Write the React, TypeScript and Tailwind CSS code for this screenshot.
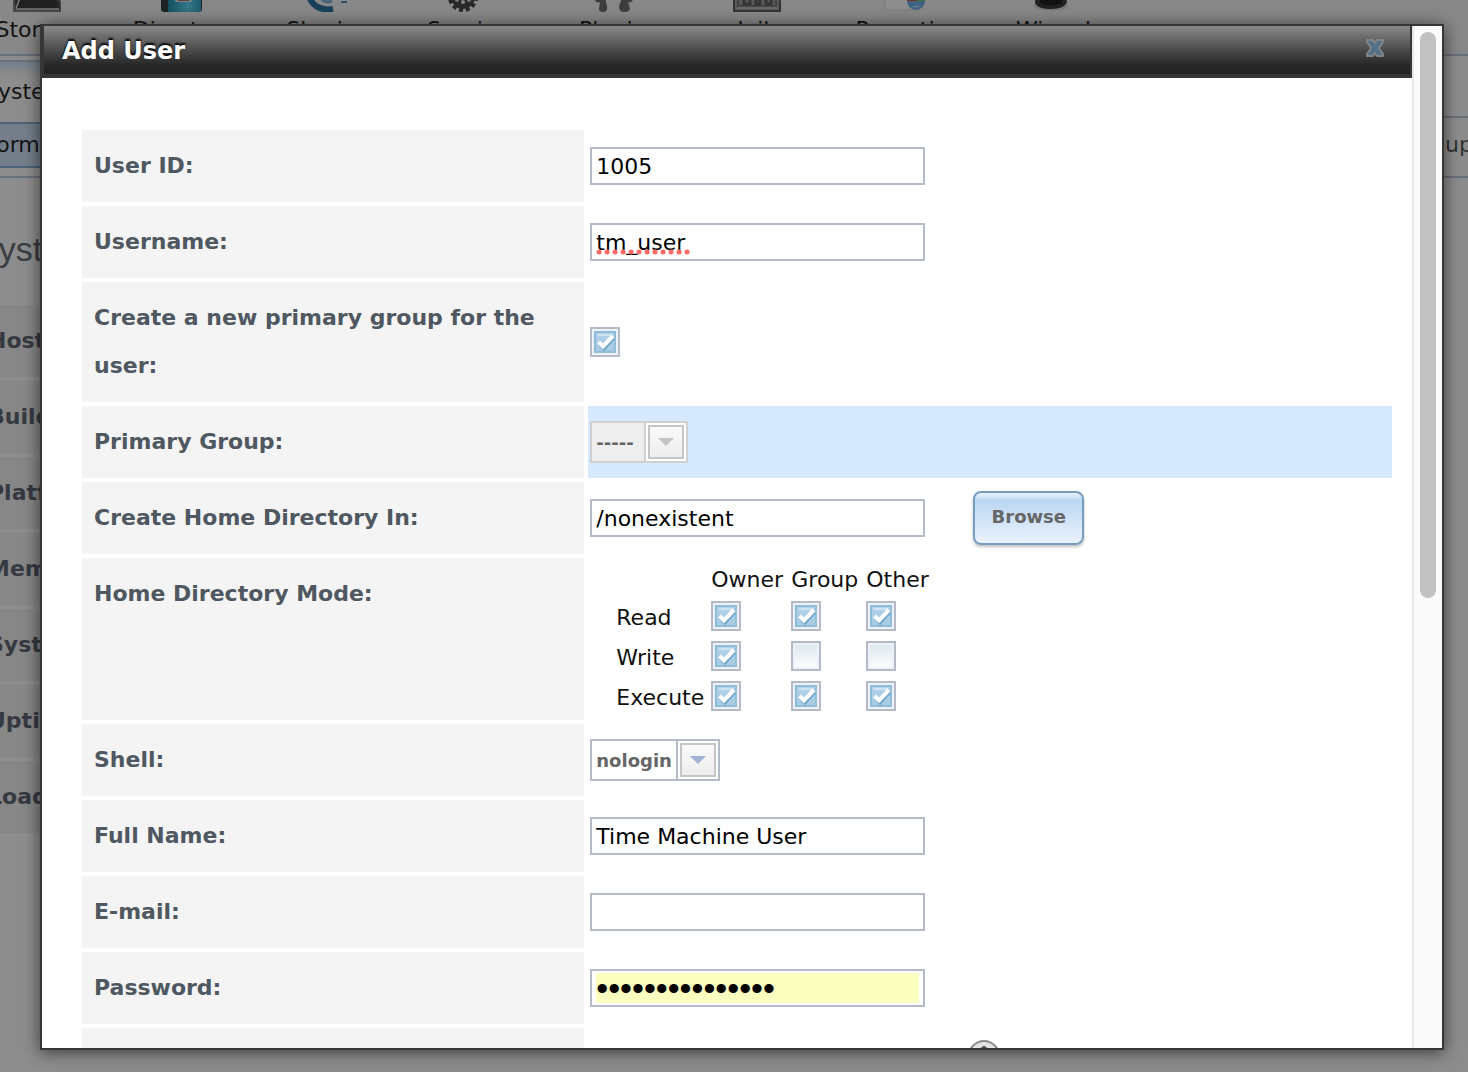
import React, { useState } from 'react';

const StorageIcon = () => (
  <svg width="48" height="48" viewBox="0 0 48 48">
    <path d="M1 47V38L6 20H42L47 38V47Z" fill="#2c2c2c" />
    <path d="M3 45L9 24H39L46 45Z" fill="#222" />
    <path d="M1 36V47H48V36" fill="none" stroke="#484848" strokeWidth="2" />
    <path d="M3 44.500L7 34M3 45H46" fill="none" stroke="#7a7a7a" strokeWidth="1.500" />
  </svg>
);

const DirectoryIcon = () => (
  <svg width="48" height="48" viewBox="0 0 48 48">
    <defs>
      <radialGradient id="cover" cx="0.6" cy="0.85" r="0.6">
        <stop offset="0" stopColor="#35788b" />
        <stop offset="1" stopColor="#14505f" />
      </radialGradient>
    </defs>
    <rect x="3" y="6" width="41" height="42" rx="3" fill="#1e2426" />
    <rect x="10" y="6" width="33" height="42" fill="url(#cover)" />
    <rect x="17" y="14" width="17" height="24" rx="2" fill="#7d8285" />
    <path d="M20 34h11v3H20z" fill="#5c4038" />
  </svg>
);

const SharingIcon = () => (
  <svg width="48" height="48" viewBox="0 0 48 48">
    <path d="M6 32C9 42 18 47 30 45" fill="none" stroke="#17405a" strokeWidth="6" />
    <path d="M17 32C20 38 24 39 29 37" fill="none" stroke="#46647b" strokeWidth="3" />
    <path d="M38 38h6l-4 0-1 1z" fill="#17405a" stroke="#17405a" />
  </svg>
);

const ServicesIcon = () => (
  <svg width="48" height="48" viewBox="0 0 48 48">
    <circle cx="15" cy="33" r="13" fill="none" stroke="#262626" strokeWidth="4" strokeDasharray="3.800 3" />
    <circle cx="15" cy="33" r="12" fill="#2a2a2a" />
    <circle cx="15" cy="38" r="2" fill="#858585" />
    <circle cx="9" cy="36" r="2" fill="#777" />
    <circle cx="21" cy="36" r="2" fill="#777" />
  </svg>
);

const PluginsIcon = () => (
  <svg width="48" height="48" viewBox="0 0 48 48">
    <path d="M0 34Q4 40 7 38L6 45Q6 48 10 48Q15 48 14 42L12 34Z" fill="#3d3d3d" />
    <path d="M41 34Q38 40 35 38L37 45Q36 48 31 48Q26 48 26 42L29 34Z" fill="#3d3d3d" />
  </svg>
);

const JailsIcon = () => (
  <svg width="48" height="48" viewBox="0 0 48 48">
    <path d="M1 10V47H47V10Z" fill="#5a5a5a" stroke="#343434" strokeWidth="2" />
    <path d="M5 10V42H43V10" fill="none" stroke="#444" strokeWidth="2" />
    <path d="M11 10V40H17V10M23 10V40H27V10M33 10V40H38V10" fill="none" stroke="#363636" strokeWidth="3" />
    <path d="M4 44H44" stroke="#686868" strokeWidth="2" />
  </svg>
);

const ReportingIcon = () => (
  <svg width="48" height="48" viewBox="0 0 48 48">
    <path d="M2 10H36V46H2Z" fill="#8e8e8e" stroke="#7a7a7a" />
    <circle cx="33" cy="37" r="9" fill="#3f6382" />
    <path d="M33 37V28A9 9 0 0 0 24 37Z" fill="#742f22" />
    <path d="M33 37V28A9 9 0 0 1 42 37Z" fill="#456f38" />
    <path d="M28 42a6 3 0 0 0 10 0" fill="#6b8199" />
  </svg>
);

const WizardIcon = () => (
  <svg width="48" height="48" viewBox="0 0 48 48">
    <ellipse cx="23" cy="42" rx="17" ry="5" fill="#7a7a7a" />
    <path d="M11 8H33L39 38Q37 45 23 45Q8 45 7 38Z" fill="#222" />
    <path d="M12 39Q23 44 34 39V36H12Z" fill="#121212" />
  </svg>
);

const toolbar = [
  { label: 'Storage', icon: <StorageIcon /> },
  { label: 'Directory', icon: <DirectoryIcon /> },
  { label: 'Sharing', icon: <SharingIcon /> },
  { label: 'Services', icon: <ServicesIcon /> },
  { label: 'Plugins', icon: <PluginsIcon /> },
  { label: 'Jails', icon: <JailsIcon /> },
  { label: 'Reporting', icon: <ReportingIcon /> },
  { label: 'Wizard', icon: <WizardIcon /> },
];

const infoRows = ['Hostname', 'Build', 'Platform', 'Memory', 'System Time', 'Uptime', 'Load Average'];

// The dimmed page behind the dialog, scrolled a little to the right and down
const Backdrop: React.FC = () => (
  <div className="h-full overflow-hidden bg-[#8d8d8d] text-[22px] text-[#141414]">
    <nav className="-mt-9 -ml-9 grid h-[90px] grid-cols-[repeat(5,145px)_136px_164px_125px] bg-[#888888]">
      {toolbar.map(item => (
        <a key={item.label} href="#" className="flex flex-col items-center leading-9">
          {item.icon}
          <span className="pl-1">{item.label}</span>
        </a>
      ))}
    </nav>
    <div className="flex">
      <div className="flex-1">
        <div className="h-2 border-y-2 border-[#6a7077]" />
        <div className="flex h-[60px] items-center bg-linear-to-b from-[#74808c] to-[#8d8d8d] to-25%">
          <span className="-ml-4 leading-[64px]">System</span>
        </div>
        <div className="h-[56px] border-b-2 border-[#6a7077]">
          <div className="-ml-11 h-[46px] w-[200px] border-y-2 border-[#4d6275] bg-[#747f8b] pl-3 leading-[42px]">Information</div>
        </div>
      </div>
      <div className="w-6 border-y-2 border-[#6a7077] whitespace-nowrap text-[#333]">
        <div className="h-[60px]" />
        <div className="border-t-2 border-[#6a7077] pl-px leading-[54px]">up</div>
      </div>
    </div>
    <h1 className="-ml-6 pt-12 pb-8 font-['Liberation_Sans',sans-serif] text-[34px] leading-[47px] text-[#3a3d42]">System</h1>
    <div className="-ml-5 flex flex-col gap-1">
      {infoRows.map(row => (
        <div key={row} className="h-[72px] w-[500px] bg-[#878787] pl-2 font-bold leading-[72px] text-[#363a40]">{row}</div>
      ))}
    </div>
  </div>
);

type RowProps = { label?: string; htmlFor?: string; highlight?: boolean; children?: React.ReactNode };

const Row: React.FC<RowProps> = ({ label, htmlFor, highlight, children }) => (
  <div className="grid grid-cols-[5fr_8fr] gap-1">
    <label htmlFor={htmlFor} className="min-h-[72px] bg-[#f4f4f4] p-3 text-[22px] font-bold leading-[48px] text-[#4f5861]">
      {label}
    </label>
    <div className={highlight ? 'flex items-center bg-[#d7e9fe] pl-[2px]' : 'flex items-center pl-[2px]'}>{children}</div>
  </div>
);

const fieldClass = 'h-[38px] w-[335px] border-2 border-[#b5bac9] px-1 text-[22px] text-black outline-none';

const CheckBox: React.FC<{ id?: string; name: string; initial: boolean }> = ({ id, name, initial }) => {
  const [checked, setChecked] = useState(initial);
  return (
    <span className="relative block size-[30px]">
      <input
        id={id}
        type="checkbox"
        aria-label={name}
        checked={checked}
        onChange={e => setChecked(e.target.checked)}
        className="peer block size-[30px] appearance-none border-2 border-[#b5bac9] bg-linear-to-b from-[#dbe7f0] to-white shadow-[inset_0_0_0_2px_#eef2f6] checked:from-[#b3d3e8] checked:to-[#a3cae2]"
      />
      <svg width="30" height="30" viewBox="0 0 30 30" className="pointer-events-none absolute inset-0 hidden peer-checked:block">
        <path d="M5 5h20v20h-20z" fill="none" stroke="#8fbcd9" strokeWidth="2" />
        <path d="M8 8h14" stroke="#cfe3f0" strokeWidth="2" />
        <path d="M9 17l5 5L24 11" fill="none" stroke="#6ea6ca" strokeWidth="3" />
        <path d="M8.500 15l4.500 4.500L23 9" fill="none" stroke="#fff" strokeWidth="4" />
      </svg>
    </span>
  );
};

const Select: React.FC<{ id: string; options: string[]; disabled?: boolean; className: string }> = ({ id, options, disabled, className }) => (
  <span className="relative block">
    <select
      id={id}
      disabled={disabled}
      className={`block h-[42px] appearance-none border-2 pl-1 text-[18px] font-bold text-[#666] opacity-100 outline-none ${className}`}
    >
      {options.map(o => <option key={o}>{o}</option>)}
    </select>
    <span
      className={
        disabled
          ? 'pointer-events-none absolute inset-y-[2px] right-[2px] w-[42px] border-l-2 border-[#d0d0d0] bg-white p-[2px]'
          : 'pointer-events-none absolute inset-y-[2px] right-[2px] w-[42px] border-l-2 border-[#b5bac9] bg-white p-[2px]'
      }
    >
      <span className="flex h-[34px] w-9 items-center justify-center border-2 border-[#c5c5c5] bg-linear-to-b from-[#fafafa] to-[#ededed]">
        <svg width="16" height="10" viewBox="0 0 16 10">
          <path d="M0 1h16L8 9z" fill={disabled ? '#c4c4c4' : '#a0b2d6'} />
        </svg>
      </span>
    </span>
  </span>
);

const modes = [
  { name: 'Read', bits: [true, true, true] },
  { name: 'Write', bits: [true, false, false] },
  { name: 'Execute', bits: [true, true, true] },
];
const who = ['Owner', 'Group', 'Other'];

const ModeTable: React.FC = () => (
  <table className="mt-[6px] mb-1 ml-[26px] w-[320px] table-fixed border-collapse text-left text-[22px] text-[#111]">
    <thead>
      <tr className="h-8">
        <td className="w-[95px] p-0" />
        <th className="w-[80px] p-0 font-normal leading-8">Owner</th>
        <th className="w-[75px] p-0 font-normal leading-8">Group</th>
        <th className="w-[70px] p-0 font-normal leading-8">Other</th>
      </tr>
    </thead>
    <tbody>
      {modes.map(mode => (
        <tr key={mode.name} className="h-10">
          <th className="p-0 pt-1 font-normal leading-9">{mode.name}</th>
          {mode.bits.map((bit, i) => (
            <td key={who[i]} className="p-0">
              <CheckBox name={`${who[i]} ${mode.name}`} initial={bit} />
            </td>
          ))}
        </tr>
      ))}
    </tbody>
  </table>
);

const HelpIcon = () => (
  <svg width="32" height="32" viewBox="0 0 32 32" className="mt-3 ml-[43px] self-start">
    <circle cx="16" cy="16" r="15" fill="#e4e4e4" stroke="#8a8a8a" strokeWidth="2" />
    <circle cx="16" cy="9" r="3" fill="#555" />
  </svg>
);

const App: React.FC = () => {
  const [userId, setUserId] = useState('1005');
  const [username, setUsername] = useState('tm_user');
  const [home, setHome] = useState('/nonexistent');
  const [fullName, setFullName] = useState('Time Machine User');
  const [email, setEmail] = useState('');
  const [password, setPassword] = useState('timemachineuser');

  return (
    <div className="relative h-screen overflow-hidden font-['DejaVu_Sans',sans-serif]">
      <Backdrop />
      <div className="absolute inset-0 pt-6 pr-6 pb-[22px] pl-10">
        <div role="dialog" aria-label="Add User" className="flex h-full border-2 border-[#363636] bg-white shadow-[0_2px_16px_rgba(0,0,0,0.6)]">
          <div className="flex min-w-0 flex-1 flex-col overflow-hidden">
            <header className="flex h-[52px] shrink-0 items-center justify-between border-x-2 border-b-4 border-[#363636] bg-linear-to-b from-[#8a8a8a] via-[#292929] via-80% to-[#222] pr-6 pl-[18px]">
              <h2 className="pt-[2px] text-[24px] font-bold leading-8 text-white [text-shadow:0_-2px_2px_#000]">Add User</h2>
              <button type="button" aria-label="Close" className="block pb-1">
                <svg width="22" height="20" viewBox="0 0 22 20">
                  <path
                    d="M3 2H9L11 5L13 2H19V4L15 10L19 16V18H13L11 15L9 18H3V16L7 10L3 4Z"
                    fill="#566f88"
                    stroke="#808488"
                    strokeWidth="2"
                    strokeLinejoin="round"
                  />
                </svg>
              </button>
            </header>

            <form className="flex flex-col gap-1 pt-[52px] pr-5 pl-10" onSubmit={e => e.preventDefault()}>
              <Row label="User ID:" htmlFor="uid">
                <input id="uid" type="text" value={userId} onChange={e => setUserId(e.target.value)} className={fieldClass} />
              </Row>
              <Row label="Username:" htmlFor="username">
                <span className="relative block">
                  <input id="username" type="text" spellCheck={false} value={username} onChange={e => setUsername(e.target.value)} className={fieldClass} />
                  {/* spelling marks */}
                  <svg width="96" height="6" viewBox="0 0 96 6" className="pointer-events-none absolute top-[26px] left-[6px]">
                    <path d="M3 3H95" stroke="#fb6a64" strokeWidth="5" strokeLinecap="round" strokeDasharray="0.100 7.900" />
                  </svg>
                </span>
              </Row>
              <Row label="Create a new primary group for the user:" htmlFor="newgroup">
                <CheckBox id="newgroup" name="Create a new primary group for the user" initial />
              </Row>
              <Row label="Primary Group:" htmlFor="group" highlight>
                <Select id="group" options={['-----']} disabled className="w-[98px] border-[#d0d0d0] bg-[#eee]" />
              </Row>
              <Row label="Create Home Directory In:" htmlFor="home">
                <input id="home" type="text" value={home} onChange={e => setHome(e.target.value)} className={fieldClass} />
                <button
                  type="button"
                  className="ml-12 h-[54px] w-[111px] rounded-lg border-2 border-[#769dc0] bg-linear-to-b from-[#e9f2fc] via-[#bbd7f3] via-15% to-[#ecf3fc] pb-1 text-[18px] font-bold text-[#666] shadow-[0_2px_3px_rgba(0,0,0,0.25)]"
                >
                  Browse
                </button>
              </Row>
              <Row label="Home Directory Mode:">
                <ModeTable />
              </Row>
              <Row label="Shell:" htmlFor="shell">
                <Select id="shell" options={['nologin', 'sh', 'csh']} className="w-[130px] border-[#b5bac9] bg-white" />
              </Row>
              <Row label="Full Name:" htmlFor="fullname">
                <input id="fullname" type="text" value={fullName} onChange={e => setFullName(e.target.value)} className={fieldClass} />
              </Row>
              <Row label="E-mail:" htmlFor="email">
                <input id="email" type="email" value={email} onChange={e => setEmail(e.target.value)} className={fieldClass} />
              </Row>
              <Row label="Password:" htmlFor="password">
                <input
                  id="password"
                  type="password"
                  value={password}
                  onChange={e => setPassword(e.target.value)}
                  className="h-[38px] w-[335px] border-2 border-[#b5bac9] bg-[#fafebf] bg-clip-content px-1 py-[2px] font-['Liberation_Sans',sans-serif] text-[34px] leading-[30px] text-black outline-none"
                />
              </Row>
              <Row>
                <span className="w-[335px]" />
                <HelpIcon />
              </Row>
            </form>
          </div>

          {/* scroll bar */}
          <div className="w-[30px] shrink-0 border-l-2 border-[#e6e6e6] bg-[#fafafa] pt-[6px] pl-[6px]">
            <div className="h-[566px] w-4 rounded-full bg-[#c1c1c1]" />
          </div>
        </div>
      </div>
    </div>
  );
};

export default App;
